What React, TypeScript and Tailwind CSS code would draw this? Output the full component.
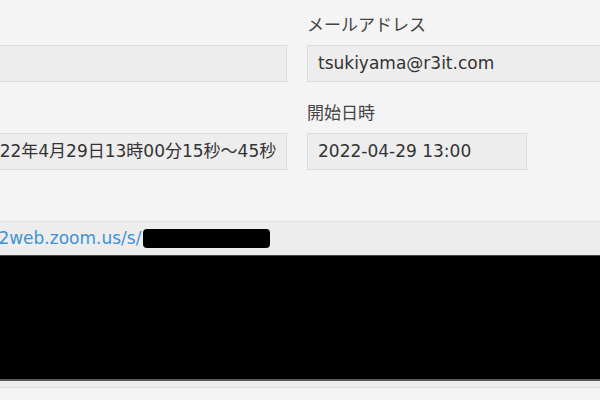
// App.tsx

const fontStack = "font-['DejaVu_Sans','Noto_Sans_CJK_JP',sans-serif]";

function Field({ label, value, width }: { label?: string; value: string; width: string }) {
  return (
    <div className={width}>
      <div className="h-6 leading-6 text-[17px] text-[#444] mb-2">{label ?? '\u00a0'}</div>
      <div className="h-[37px] border border-[#dcdcdc] bg-[#ededed] flex items-center pl-[10px] text-[17px] text-[#333] whitespace-nowrap overflow-hidden">
        {value}
      </div>
    </div>
  );
}

export default function App() {
  return (
    <div className={`w-[600px] h-[400px] overflow-hidden bg-[#f4f4f4] ${fontStack}`}>
      {/* form rows */}
      <div className="pt-[13px] flex flex-col gap-[19px]">
        <div className="flex gap-5 ml-[-33px]">
          <Field value="" width="w-[320px] shrink-0" />
          <Field label="メールアドレス" value="tsukiyama@r3it.com" width="w-[320px] shrink-0" />
        </div>
        <div className="flex gap-5 ml-[-33px]">
          <Field value="2022年4月29日13時00分15秒～45秒" width="w-[320px] shrink-0" />
          <Field label="開始日時" value="2022-04-29 13:00" width="w-[220px] shrink-0" />
        </div>
      </div>

      {/* link + redacted preview */}
      <div className="mt-[51px] border-t border-[#e0e0e0] bg-[#ededed]">
        <div className="h-[33px] flex items-center whitespace-nowrap ml-[-93px]">
          <span className="text-[17px] text-[#3d92d9]">https://us02web.zoom.us/s/</span>
          <span className="ml-[2px] inline-block w-[127px] h-[19px] rounded-[4px] bg-black" />
        </div>
        <div className="h-[126px] bg-black border-t border-[#444] border-b-2 border-b-[#555]" />
        <div className="h-[7px] border-b border-[#dcdcdc]" />
      </div>
    </div>
  );
}
